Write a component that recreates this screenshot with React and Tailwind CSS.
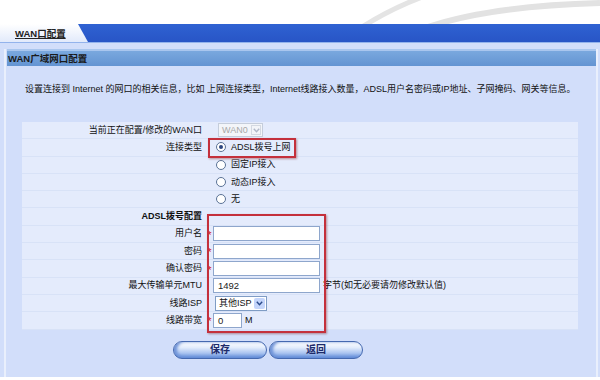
const Row = ({ label, bold, children }) => (
  <div className="flex h-[17.3px] items-center border-b border-[#d8e2f7]">
    <div className={`w-[184px] pr-[4px] text-right whitespace-nowrap ${bold ? "font-bold" : ""}`}>{label}</div>
    <div className="flex items-center whitespace-nowrap">{children}</div>
  </div>
);

const Radio = ({ checked, label }) => (
  <div className="flex items-center pl-[10px]">
    <span className="flex h-[10px] w-[10px] items-center justify-center rounded-full border border-[#5a7296] bg-white">
      {checked && <span className="h-[4px] w-[4px] rounded-full bg-[#2c4680]" />}
    </span>
    <span className="ml-[5px]">{label}</span>
  </div>
);

const Star = () => <span className="w-[7px] pt-[3px] text-center text-[11px] text-[#d02020]">*</span>;

const Input = ({ w = "w-[107px]", value = "" }) => (
  <div className={`${w} h-[15px] border border-[#8ea6cc] bg-white pl-[4px] text-[9.5px] leading-[13px] text-[#222]`}>{value}</div>
);

const Chevron = ({ color }) => (
  <svg width="7" height="5" viewBox="0 0 7 5"><path d="M0.8 0.8 L3.5 3.8 L6.2 0.8" stroke={color} strokeWidth="1.4" fill="none" /></svg>
);

export default function App() {
  return (
    <div className="relative h-[380px] w-[600px] overflow-hidden bg-white font-['Liberation_Sans','Noto_Sans_CJK_SC',sans-serif] text-[9px] leading-[11px] text-[#111]">
      <div className="relative h-[24px] bg-white">
        <svg className="absolute left-0 top-0" width="600" height="24" viewBox="0 0 600 24">
          <path d="M362 27 Q392 8 425 -4" stroke="#e4e4e4" strokeWidth="5" fill="none" />
          <path d="M428 27 Q490 6 600 3" stroke="#e2e2e2" strokeWidth="6" fill="none" />
        </svg>
      </div>
      <div className="relative h-[19px] border-b border-[#93b3ec] bg-[linear-gradient(to_bottom,#2f62d2,#2855c6)]">
        <div className="flex h-full w-[88px] items-center bg-[linear-gradient(to_bottom,#ffffff,#e2eafb)] pl-[15px] [clip-path:polygon(0_0,78px_0,88px_100%,0_100%)]">
          <span className="font-bold underline text-[#222] text-[9.5px]">WAN口配置</span>
        </div>
      </div>
      <div className="h-[334px] bg-[#d2defa] pl-[4px] pr-[2px] pt-[6px]">
        <div className="h-full border-x-2 border-[#e9effc] pl-[1px]">
          <div className="flex h-[17px] items-center border-t-2 border-[#a9c6ee] bg-[linear-gradient(to_bottom,#7aa8de,#6394d2)] pl-[1px] text-[9.5px] font-bold text-[#1a1a1a]">
            WAN广域网口配置
          </div>
          <div className="pl-[18px] pt-[18px] whitespace-nowrap">
            设置连接到 Internet 的网口的相关信息，比如 上网连接类型，Internet线路接入数量，ADSL用户名密码或IP地址、子网掩码、网关等信息。
          </div>
          <div className="ml-[15px] mt-[27px] w-[556px] bg-[#e4ebfc]">
            <Row label="当前正在配置/修改的WAN口">
              <div className="ml-[12px] flex h-[14px] w-[45px] items-center justify-between border border-[#c5cddb] bg-[#f3f5f9] pl-[3px] text-[9px] text-[#a8a8a8]">
                <span>WAN0</span>
                <span className="mr-[1px] flex h-[10px] w-[10px] items-center justify-center border border-[#d4d9e2]"><Chevron color="#b0b8c8" /></span>
              </div>
            </Row>
            <Row label="连接类型"><Radio checked label="ADSL拨号上网" /></Row>
            <Row label=""><Radio label="固定IP接入" /></Row>
            <Row label=""><Radio label="动态IP接入" /></Row>
            <Row label=""><Radio label="无" /></Row>
            <Row label="ADSL拨号配置" bold></Row>
            <Row label="用户名"><Star /><Input /></Row>
            <Row label="密码"><Star /><Input /></Row>
            <Row label="确认密码"><Star /><Input /></Row>
            <Row label="最大传输单元MTU"><span className="w-[7px]" /><Input value="1492" /><span className="ml-[3px]">字节(如无必要请勿修改默认值)</span></Row>
            <Row label="线路ISP">
              <span className="w-[9px]" />
              <div className="flex h-[15px] w-[52px] items-center justify-between border border-[#7f9cc4] bg-white pl-[3px] text-[9px]">
                <span>其他ISP</span>
                <span className="mr-[1px] flex h-[11px] w-[11px] items-center justify-center rounded-[2px] bg-[#c4d5fb]"><Chevron color="#2b4b8c" /></span>
              </div>
            </Row>
            <Row label="线路带宽"><Star /><Input w="w-[29px]" value="0" /><span className="ml-[3px]">M</span></Row>
          </div>
          <div className="ml-[166px] mt-[11px] flex gap-[2px]">
            <button className="h-[18px] w-[94px] rounded-full border border-[#4569b0] bg-[linear-gradient(to_bottom,#ffffff_0%,#e2ecfc_35%,#a9c3f0_70%,#5a86d6_100%)] text-[10px] font-bold text-[#1d2b6a] shadow-[inset_3px_0_3px_#6f93d8]">保存</button>
            <button className="h-[18px] w-[94px] rounded-full border border-[#4569b0] bg-[linear-gradient(to_bottom,#ffffff_0%,#e2ecfc_35%,#a9c3f0_70%,#5a86d6_100%)] text-[10px] font-bold text-[#1d2b6a] shadow-[inset_3px_0_3px_#6f93d8]">返回</button>
          </div>
        </div>
      </div>
      <div className="h-[3px] bg-white" />
      <div className="pointer-events-none absolute left-[208px] top-[138px] h-[20px] w-[88px] border-2 border-[#c4303c] shadow-[1px_1px_2px_rgba(120,0,0,0.4)]" />
      <div className="pointer-events-none absolute left-[207px] top-[214px] h-[119px] w-[119px] border-2 border-[#c4303c] shadow-[1px_1px_2px_rgba(120,0,0,0.4)]" />
    </div>
  );
}
